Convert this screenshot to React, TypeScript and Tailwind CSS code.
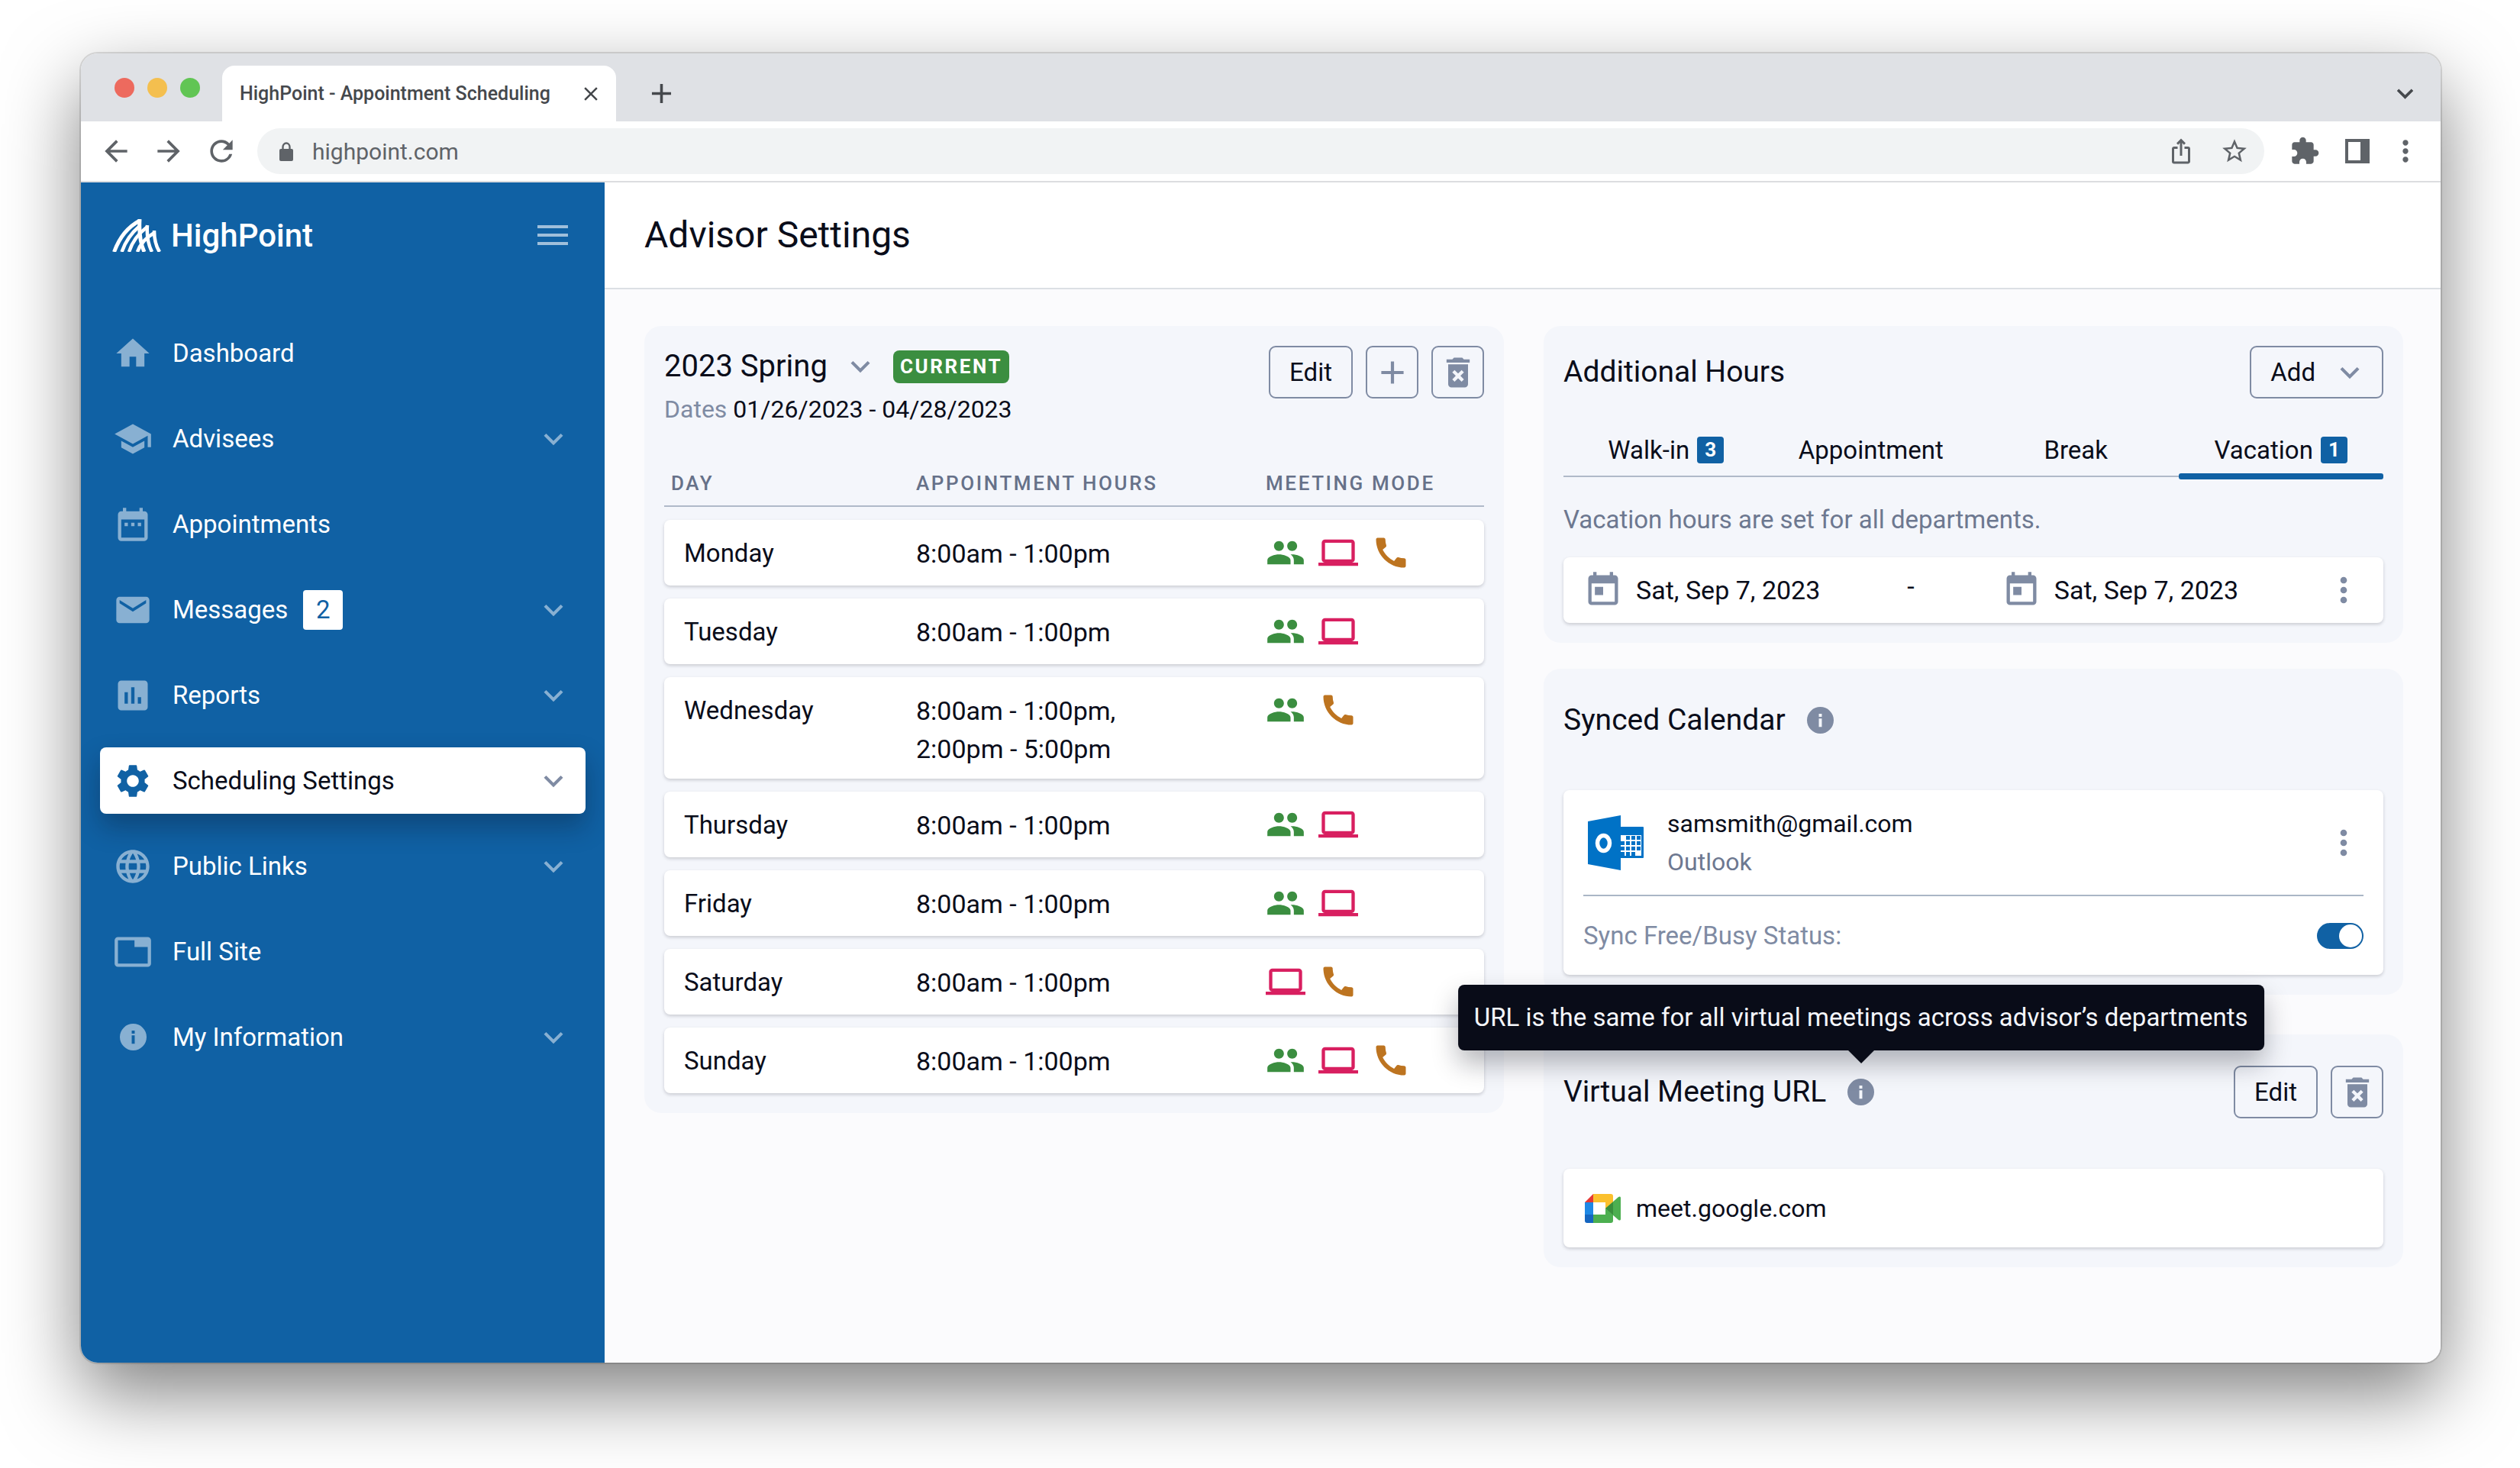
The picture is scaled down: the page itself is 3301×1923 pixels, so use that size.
import type { ReactNode } from "react";
import type { IconType } from "react-icons";
import {
  MdAdd,
  MdArrowBack,
  MdArrowForward,
  MdAssessment,
  MdCall,
  MdClose,
  MdDateRange,
  MdDeleteForever,
  MdEmail,
  MdExpandMore,
  MdExtension,
  MdGroup,
  MdHome,
  MdIosShare,
  MdLanguage,
  MdLaptop,
  MdMoreVert,
  MdRefresh,
  MdSchool,
  MdSettings,
  MdStarBorder,
  MdTab,
  MdToday,
} from "react-icons/md";

function InfoIcon({ className }: { className: string }) {
  return (
    <svg viewBox="0 0 16 16" className={className} fill="currentColor" aria-hidden="true">
      <path
        fillRule="evenodd"
        d="M8 0a8 8 0 1 1 0 16A8 8 0 0 1 8 0ZM7.1 7v5h1.8V7H7.1Zm0-2.9v1.8h1.8V4.1H7.1Z"
      />
    </svg>
  );
}

function NavInfoIcon({ className }: { className?: string }) {
  return (
    <span className={`flex items-center justify-center ${className ?? ""}`}>
      <InfoIcon className="size-[35px]" />
    </span>
  );
}

function LockIcon() {
  return (
    <svg viewBox="0 0 18 25" className="h-[25px] w-[18px]" aria-hidden="true">
      <rect y="9" width="18" height="16" rx="2" fill="currentColor" />
      <path d="M4.500 10V6.500a4.500 5 0 0 1 9 0V10" fill="none" stroke="currentColor" strokeWidth="2.400" />
    </svg>
  );
}

function HighPointMark() {
  return (
    <svg viewBox="0 0 65 43" className="h-[43px] w-[65px]" fill="none" stroke="currentColor" aria-hidden="true">
      <path d="M2.500 43C9 25 19 11 36 2" strokeWidth="5" />
      <path d="M12.500 43C17 30 24 19 36 9" strokeWidth="4.500" />
      <path d="M22 43C25 33 33 20 46 10" strokeWidth="4.500" />
      <path d="M33 43C36 34 43 25 55 18" strokeWidth="4.500" />
      <path d="M36 0C35 16 37 32 42 43" strokeWidth="5" />
      <path d="M46 8C45 21 47 33 52 43" strokeWidth="4.500" />
      <path d="M55 15C55 26 57 35 62 43" strokeWidth="4.500" />
    </svg>
  );
}

function OutlookLogo() {
  return (
    <svg viewBox="0 0 74 72" className="h-[72px] w-[74px]" aria-hidden="true">
      <rect x="40" y="15" width="33" height="41" rx="1" fill="#0072c6" />
      <rect x="43" y="26" width="27" height="27" fill="#fff" />
      <g fill="#0072c6">
        <rect x="50" y="27" width="5" height="5" />
        <rect x="57" y="27" width="5" height="5" />
        <rect x="64" y="27" width="5" height="5" />
        <rect x="43" y="34" width="5" height="5" />
        <rect x="50" y="34" width="5" height="5" />
        <rect x="57" y="34" width="5" height="5" />
        <rect x="64" y="34" width="5" height="5" />
        <rect x="43" y="41" width="5" height="5" />
        <rect x="50" y="41" width="5" height="5" />
        <rect x="57" y="41" width="5" height="5" />
        <rect x="64" y="41" width="5" height="5" />
        <rect x="43" y="48" width="5" height="5" />
        <rect x="50" y="48" width="5" height="5" />
        <rect x="57" y="48" width="5" height="5" />
      </g>
      <path d="M0 8 43 0V72L0 64Z" fill="#0072c6" />
      <ellipse cx="20.500" cy="36.500" rx="8" ry="10" fill="none" stroke="#fff" strokeWidth="5.500" />
    </svg>
  );
}

function MeetLogo() {
  return (
    <svg viewBox="0 0 47 38" className="h-[38px] w-[47px]" aria-hidden="true">
      <path d="M0 11 11 0V11Z" fill="#e53935" />
      <path d="M0 11H11V27H0Z" fill="#1e88e5" />
      <path d="M0 27H11V38H3a3 3 0 0 1-3-3Z" fill="#1565c0" />
      <path d="M11 0H34a3 3 0 0 1 3 3V12L27 20V11H11Z" fill="#fbc02d" />
      <path d="M11 27H27V19L37 27V35a3 3 0 0 1-3 3H11Z" fill="#4caf50" />
      <path d="M27 19 44 4C45.500 3 47 3.500 47 5V33C47 34.500 45.500 35 44 34Z" fill="#4caf50" />
      <path d="M27 19 37 10.500V27.500Z" fill="#388e3c" />
    </svg>
  );
}

function SidePanelIcon() {
  return (
    <svg viewBox="0 0 32 32" className="size-8" aria-hidden="true">
      <path fillRule="evenodd" d="M0 0H32V32H0ZM4 4V28H20V4Z" fill="currentColor" />
    </svg>
  );
}

/* ---------- Browser frame ---------- */

function TabStrip() {
  return (
    <div className="flex h-[89px] items-end bg-[#dfe1e5] pl-[44px] pr-[25px]">
      <div className="flex gap-[17px] self-center">
        <span className="size-[26px] rounded-full bg-[#ed6a5e]" />
        <span className="size-[26px] rounded-full bg-[#f4bf4f]" />
        <span className="size-[26px] rounded-full bg-[#61c554]" />
      </div>
      <div className="ml-[29px] flex h-[73px] w-[516px] items-center justify-between rounded-t-[16px] bg-white pl-[23px] pr-[18px]">
        <span className="text-[25px] font-medium whitespace-nowrap text-[#45484c]">
          HighPoint - Appointment Scheduling
        </span>
        <button type="button" aria-label="Close tab">
          <MdClose className="size-[30px] text-[#45484c]" />
        </button>
      </div>
      <button type="button" aria-label="New tab" className="ml-[38px] flex h-[73px] items-center">
        <MdAdd className="size-[43px] text-[#45484c]" />
      </button>
      <button type="button" aria-label="Search tabs" className="ml-auto flex h-[73px] items-center">
        <MdExpandMore className="size-[43px] text-[#45484c]" />
      </button>
    </div>
  );
}

function Toolbar() {
  return (
    <div className="flex h-[80px] items-center gap-[25px] border-b-2 border-[#dcdde0] bg-white px-[24px] text-[#5f6368]">
      <button type="button" aria-label="Back">
        <MdArrowBack className="size-[44px]" />
      </button>
      <button type="button" aria-label="Forward">
        <MdArrowForward className="size-[44px]" />
      </button>
      <button type="button" aria-label="Reload">
        <MdRefresh className="size-[44px]" />
      </button>
      <div className="flex h-[60px] flex-1 items-center rounded-full bg-[#f1f3f4] pl-[29px] pr-[20px]">
        <LockIcon />
        <input
          type="text"
          aria-label="Address"
          defaultValue="highpoint.com"
          className="ml-[25px] min-w-0 flex-1 bg-transparent text-[30px] text-[#5f6368] outline-none"
        />
        <button type="button" aria-label="Share">
          <MdIosShare className="size-[36px]" />
        </button>
        <button type="button" aria-label="Bookmark" className="ml-[33px]">
          <MdStarBorder className="size-[38px]" />
        </button>
      </div>
      <button type="button" aria-label="Extensions" className="ml-[8px]">
        <MdExtension className="size-[40px]" />
      </button>
      <button type="button" aria-label="Side panel" className="ml-[8px]">
        <SidePanelIcon />
      </button>
      <button type="button" aria-label="Browser menu">
        <MdMoreVert className="size-[44px]" />
      </button>
    </div>
  );
}

/* ---------- Sidebar ---------- */

type NavItem = {
  label: string;
  icon: IconType | typeof NavInfoIcon;
  expandable?: boolean;
  badge?: number;
  active?: boolean;
};

const navItems: NavItem[] = [
  { label: "Dashboard", icon: MdHome },
  { label: "Advisees", icon: MdSchool, expandable: true },
  { label: "Appointments", icon: MdDateRange },
  { label: "Messages", icon: MdEmail, expandable: true, badge: 2 },
  { label: "Reports", icon: MdAssessment, expandable: true },
  { label: "Scheduling Settings", icon: MdSettings, expandable: true, active: true },
  { label: "Public Links", icon: MdLanguage, expandable: true },
  { label: "Full Site", icon: MdTab },
  { label: "My Information", icon: NavInfoIcon, expandable: true },
];

function NavLink({ label, icon: Icon, expandable, badge, active }: NavItem) {
  return (
    <a
      href="#"
      aria-current={active ? "page" : undefined}
      className={
        active
          ? "flex h-[87px] items-center rounded-[8px] bg-white px-[17px] text-[#0a0d1a] shadow-[0_17px_34px_rgba(10,13,26,0.3)]"
          : "flex h-[87px] items-center rounded-[8px] px-[17px] text-white"
      }
    >
      <Icon className={active ? "size-[52px] text-[#1061a4]" : "size-[52px] text-[#88b0d2]"} />
      <span className="ml-[26px] text-[33px] whitespace-nowrap">{label}</span>
      {badge !== undefined && (
        <span className="ml-[20px] flex size-[52px] items-center justify-center rounded-[4px] bg-white text-[33px] text-[#1061a4]">
          {badge}
        </span>
      )}
      {expandable && (
        <MdExpandMore
          className={active ? "ml-auto size-[50px] text-[#7f8ba3]" : "ml-auto size-[50px] text-[#88b0d2]"}
        />
      )}
    </a>
  );
}

function Sidebar() {
  return (
    <aside className="w-[686px] shrink-0 bg-[#1061a4]">
      <div className="flex h-[138px] items-center justify-between pl-[41px] pr-[48px] text-white">
        <a href="#" className="flex items-center gap-[12px]">
          <HighPointMark />
          <span className="text-[42px] font-medium">HighPoint</span>
        </a>
        <button type="button" aria-label="Toggle menu" className="flex w-[40px] flex-col gap-[7px]">
          <span className="h-[4px] bg-[#9fbfdb]" />
          <span className="h-[4px] bg-[#9fbfdb]" />
          <span className="h-[4px] bg-[#9fbfdb]" />
        </button>
      </div>
      <nav className="mt-[42px] flex flex-col gap-[25px] px-[25px]">
        {navItems.map((item) => (
          <NavLink key={item.label} {...item} />
        ))}
      </nav>
    </aside>
  );
}

/* ---------- Shared parts ---------- */

function OutlineButton({ children, label, wide }: { children: ReactNode; label?: string; wide?: boolean }) {
  return (
    <button
      type="button"
      aria-label={label}
      className={
        wide
          ? "flex h-[69px] items-center justify-center rounded-[9px] border-2 border-[#7f8ba3] px-[25px] text-[33px] text-[#0a0d1a]"
          : "flex size-[69px] items-center justify-center rounded-[9px] border-2 border-[#7f8ba3] text-[#7f8ba3]"
      }
    >
      {children}
    </button>
  );
}

function Card({ children, className }: { children: ReactNode; className: string }) {
  return (
    <div className={`rounded-[8px] bg-white shadow-[0_2px_4px_rgba(10,13,26,0.18)] ${className}`}>{children}</div>
  );
}

function CountBadge({ children }: { children: ReactNode }) {
  return (
    <span className="flex size-[35px] items-center justify-center rounded-[4px] bg-[#1061a4] text-[26px] font-bold text-white">
      {children}
    </span>
  );
}

/* ---------- Schedule ---------- */

type Mode = "person" | "virtual" | "phone";

const schedule: { day: string; hours: string[]; modes: Mode[] }[] = [
  { day: "Monday", hours: ["8:00am - 1:00pm"], modes: ["person", "virtual", "phone"] },
  { day: "Tuesday", hours: ["8:00am - 1:00pm"], modes: ["person", "virtual"] },
  { day: "Wednesday", hours: ["8:00am - 1:00pm,", "2:00pm - 5:00pm"], modes: ["person", "phone"] },
  { day: "Thursday", hours: ["8:00am - 1:00pm"], modes: ["person", "virtual"] },
  { day: "Friday", hours: ["8:00am - 1:00pm"], modes: ["person", "virtual"] },
  { day: "Saturday", hours: ["8:00am - 1:00pm"], modes: ["virtual", "phone"] },
  { day: "Sunday", hours: ["8:00am - 1:00pm"], modes: ["person", "virtual", "phone"] },
];

function ModeIcon({ mode }: { mode: Mode }) {
  if (mode === "person") return <MdGroup title="In person" className="size-[52px] text-[#3b8e40]" />;
  if (mode === "virtual") return <MdLaptop title="Virtual" className="size-[52px] text-[#d81f60]" />;
  return <MdCall title="Phone" className="size-[52px] text-[#bd7420]" />;
}

function SchedulePanel() {
  return (
    <section className="rounded-[22px] bg-[#f4f6fb] p-[26px]">
      <div className="flex items-start justify-between">
        <div>
          <div className="flex h-[54px] items-center">
            <h2 className="text-[40px] whitespace-nowrap">2023 Spring</h2>
            <button type="button" aria-label="Choose term" className="ml-[18px]">
              <MdExpandMore className="size-[50px] text-[#7f8ba3]" />
            </button>
            <span className="ml-[18px] flex h-[43px] items-center rounded-[8px] bg-[#3b8e40] px-[9px] text-[26px] font-bold tracking-widest text-white">
              CURRENT
            </span>
          </div>
          <p className="text-[32px] leading-[58px]">
            <span className="text-[#7f8ba3]">Dates</span> 01/26/2023 - 04/28/2023
          </p>
        </div>
        <div className="flex gap-[17px]">
          <OutlineButton wide>Edit</OutlineButton>
          <OutlineButton label="Add term">
            <MdAdd className="size-[50px]" />
          </OutlineButton>
          <OutlineButton label="Delete term">
            <MdDeleteForever className="size-[52px]" />
          </OutlineButton>
        </div>
      </div>

      <table className="mt-[50px] block">
        <thead className="block">
          <tr className="grid grid-cols-[321px_458px_1fr] border-b-2 border-[#b0b9c9] pb-[11px] pl-[9px] text-left text-[26px] leading-[36px] tracking-widest text-[#667189]">
            <th scope="col" className="font-medium">DAY</th>
            <th scope="col" className="font-medium">APPOINTMENT HOURS</th>
            <th scope="col" className="font-medium">MEETING MODE</th>
          </tr>
        </thead>
        <tbody className="mt-[17px] flex flex-col gap-[17px]">
          {schedule.map(({ day, hours, modes }) => (
            <tr
              key={day}
              className="grid min-h-[86px] grid-cols-[304px_458px_1fr] rounded-[8px] bg-white pl-[26px] leading-[50px] shadow-[0_2px_4px_rgba(10,13,26,0.18)]"
            >
              <td className="pt-[19px] text-[33px]">{day}</td>
              <td className="pt-[19px] pb-[14px] text-[34px]">
                {hours.map((range) => (
                  <span key={range} className="block">
                    {range}
                  </span>
                ))}
              </td>
              <td className="flex gap-[17px] pt-[17px]">
                {modes.map((mode) => (
                  <ModeIcon key={mode} mode={mode} />
                ))}
              </td>
            </tr>
          ))}
        </tbody>
      </table>
    </section>
  );
}

/* ---------- Additional hours ---------- */

const tabs: { label: string; count?: number; selected?: boolean }[] = [
  { label: "Walk-in", count: 3 },
  { label: "Appointment" },
  { label: "Break" },
  { label: "Vacation", count: 1, selected: true },
];

function DateValue({ children }: { children: ReactNode }) {
  return (
    <span className="flex items-center gap-[17px] text-[34px] whitespace-nowrap">
      <MdToday className="size-[52px] text-[#7f8ba3]" />
      {children}
    </span>
  );
}

function AdditionalHoursPanel() {
  return (
    <section className="rounded-[22px] bg-[#f4f6fb] p-[26px]">
      <div className="flex items-center justify-between">
        <h2 className="text-[39px]">Additional Hours</h2>
        <OutlineButton wide>
          Add
          <MdExpandMore className="-mr-[8px] ml-[20px] size-[50px] text-[#7f8ba3]" />
        </OutlineButton>
      </div>
      <div role="tablist" className="mt-[34px] flex h-[69px] border-b-2 border-[#b0b9c9]">
        {tabs.map(({ label, count, selected }) => (
          <button
            key={label}
            type="button"
            role="tab"
            aria-selected={!!selected}
            className="relative flex flex-1 items-center justify-center gap-[10px] text-[33px]"
          >
            {label}
            {count !== undefined && <CountBadge>{count}</CountBadge>}
            {selected && (
              <span className="absolute inset-x-0 -bottom-[5px] h-[8px] rounded-[3px] bg-[#1061a4]" />
            )}
          </button>
        ))}
      </div>
      <p className="mt-[31px] text-[33px] leading-[50px] text-[#6d7890]">
        Vacation hours are set for all departments.
      </p>
      <Card className="mt-[24px] flex h-[86px] items-center px-[26px]">
        <DateValue>Sat, Sep 7, 2023</DateValue>
        <span className="mx-[114px] -mt-[10px] text-[34px]">-</span>
        <DateValue>Sat, Sep 7, 2023</DateValue>
        <button type="button" aria-label="Vacation options" className="ml-auto">
          <MdMoreVert className="size-[52px] text-[#7f8ba3]" />
        </button>
      </Card>
    </section>
  );
}

/* ---------- Synced calendar ---------- */

function SyncedCalendarPanel() {
  return (
    <section className="mt-[34px] rounded-[22px] bg-[#f4f6fb] px-[26px] pt-[34px] pb-[26px]">
      <div className="flex h-[67px] items-center gap-[28px]">
        <h2 className="text-[39px]">Synced Calendar</h2>
        <button type="button" aria-label="About synced calendars">
          <InfoIcon className="size-[35px] text-[#7f8ba3]" />
        </button>
      </div>
      <Card className="mt-[58px] px-[26px]">
        <div className="flex h-[139px] items-center border-b-2 border-[#aab6c6] pl-[6px]">
          <OutlookLogo />
          <div className="ml-[30px] text-[32px] leading-[50px]">
            <p>samsmith@gmail.com</p>
            <p className="text-[#6d7890]">Outlook</p>
          </div>
          <button type="button" aria-label="Calendar options" className="ml-auto">
            <MdMoreVert className="size-[52px] text-[#7f8ba3]" />
          </button>
        </div>
        <div className="flex h-[103px] items-center justify-between">
          <label htmlFor="sync-status" className="text-[33px] text-[#7f8ba3]">
            Sync Free/Busy Status:
          </label>
          <input
            id="sync-status"
            type="checkbox"
            role="switch"
            defaultChecked
            className="flex h-[34px] w-[61px] appearance-none items-center rounded-full bg-[#7f8ba3] px-[2px] before:size-[30px] before:rounded-full before:bg-white before:content-[''] checked:justify-end checked:bg-[#1061a4]"
          />
        </div>
      </Card>
    </section>
  );
}

/* ---------- Virtual meeting ---------- */

function VirtualMeetingPanel() {
  return (
    <section className="mt-[52px] rounded-[22px] bg-[#f4f6fb] px-[26px] pt-[41px] pb-[26px]">
      <div className="flex items-center">
        <h2 className="text-[39px]">Virtual Meeting URL</h2>
        <div className="relative ml-[28px]">
          <button type="button" aria-describedby="url-tip" aria-label="About the meeting URL" className="block">
            <InfoIcon className="size-[35px] text-[#7f8ba3]" />
          </button>
          <div
            id="url-tip"
            role="tooltip"
            className="absolute bottom-full left-1/2 mb-[37px] flex h-[86px] -translate-x-1/2 items-center rounded-[8px] bg-[#090c18] px-[21px] text-[33px] whitespace-nowrap text-[#f4f6fb] shadow-[0_17px_34px_rgba(10,13,26,0.3)]"
          >
            URL is the same for all virtual meetings across advisor’s departments
            <svg
              viewBox="0 0 34 17"
              className="absolute top-full left-1/2 h-[17px] w-[34px] -translate-x-1/2"
              aria-hidden="true"
            >
              <path d="M0 0H34L17 17Z" fill="#090c18" />
            </svg>
          </div>
        </div>
        <div className="ml-auto flex gap-[17px]">
          <OutlineButton wide>Edit</OutlineButton>
          <OutlineButton label="Delete meeting URL">
            <MdDeleteForever className="size-[52px]" />
          </OutlineButton>
        </div>
      </div>
      <Card className="mt-[66px] flex h-[103px] items-center gap-[20px] px-[28px]">
        <MeetLogo />
        <a href="#" className="text-[32px]">
          meet.google.com
        </a>
      </Card>
    </section>
  );
}

export default function App() {
  return (
    <div className="flex min-h-screen flex-col bg-white pt-[70px] pr-[104px] pb-[138px] pl-[106px] font-['Roboto',sans-serif] text-[#0a0d1a]">
      <div className="flex flex-1 flex-col rounded-[22px] shadow-[0_0_0_2px_rgba(0,0,0,0.12),0_40px_100px_rgba(0,0,0,0.5)]">
        <div className="flex flex-1 flex-col overflow-hidden rounded-[22px]">
          <TabStrip />
          <Toolbar />
          <div className="flex flex-1">
            <Sidebar />
            <main className="flex-1 bg-[#fbfbfd]">
              <header className="flex h-[140px] items-center border-b-2 border-[#dcdfe4] bg-white pl-[52px]">
                <h1 className="text-[48px]">Advisor Settings</h1>
              </header>
              <div className="grid grid-cols-2 items-start gap-[52px] pt-[48px] pr-[49px] pb-[52px] pl-[52px]">
                <SchedulePanel />
                <div>
                  <AdditionalHoursPanel />
                  <SyncedCalendarPanel />
                  <VirtualMeetingPanel />
                </div>
              </div>
            </main>
          </div>
        </div>
      </div>
    </div>
  );
}
